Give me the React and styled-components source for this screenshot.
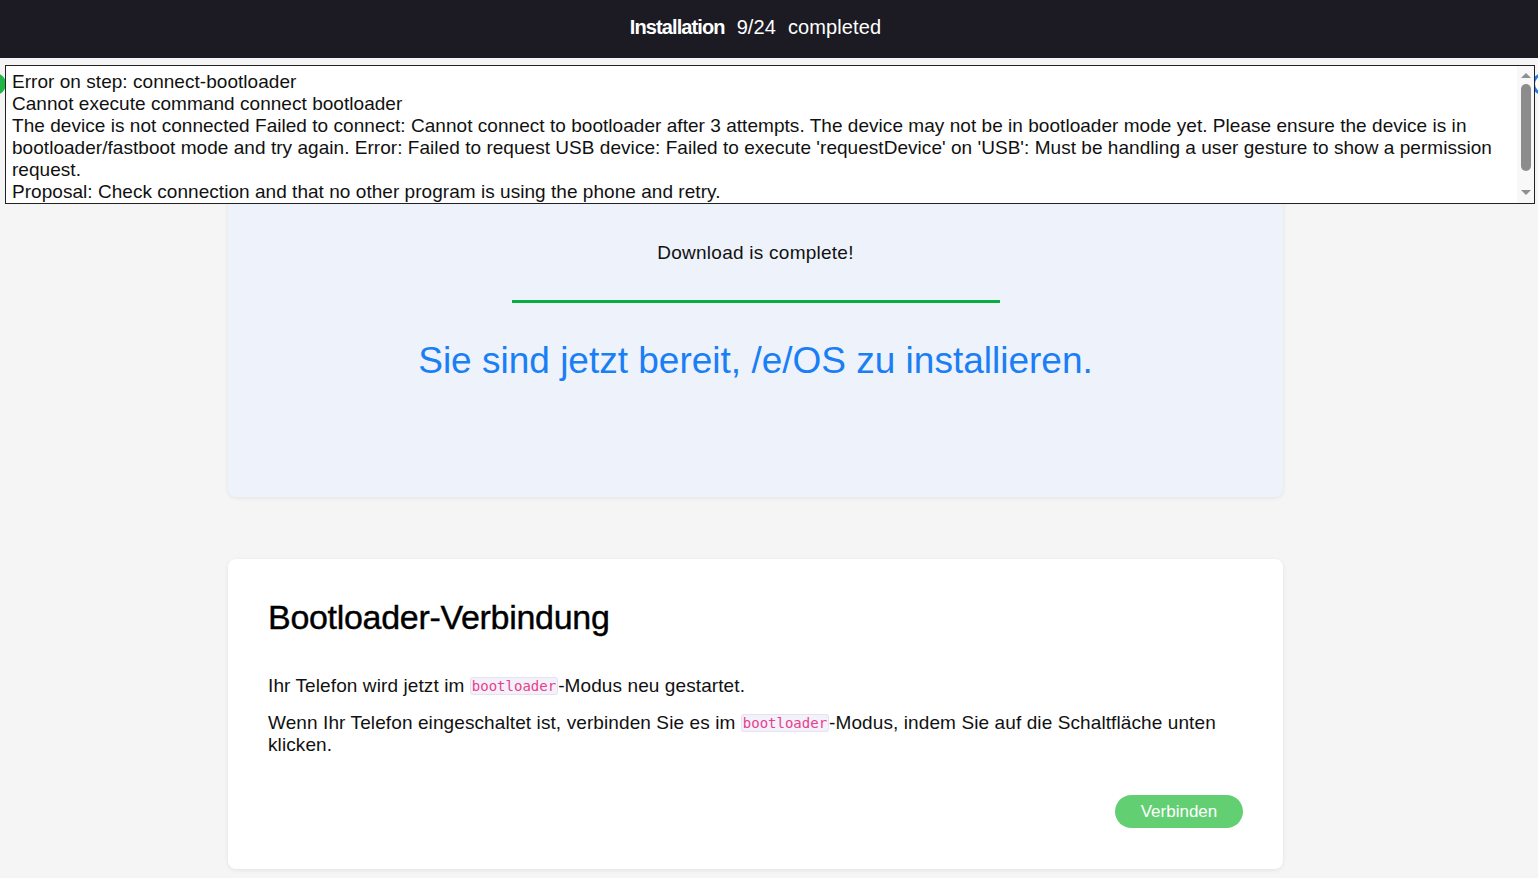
import React from 'react';
import styled, { createGlobalStyle } from 'styled-components';

const GlobalStyle = createGlobalStyle`
  html, body {
    margin: 0;
    padding: 0;
    background: #f5f5f5;
    font-family: "Liberation Sans", Arial, sans-serif;
    color: #111;
  }
`;

const Header = styled.header`
  height: 58px;
  background: #1c1b24;
  color: #ffffff;
  display: flex;
  align-items: center;
  justify-content: center;
  gap: 12px;
  font-size: 20px;
  letter-spacing: 0.1px;
  padding: 0 27px 4px 0;
  box-sizing: border-box;
`;

const HeaderStrong = styled.span`
  font-weight: 700;
  letter-spacing: -0.9px;
`;

const StepRow = styled.div`
  display: flex;
  justify-content: space-between;
  align-items: center;
  margin: 14px -16px 0;
  height: 24px;
`;

const StepDot = styled.span`
  width: 22px;
  height: 22px;
  border-radius: 50%;
  box-sizing: border-box;
  background: ${(p) => (p.$done ? '#20b646' : '#ffffff')};
  border: 3px solid ${(p) => (p.$done ? '#20b646' : '#1a7ef5')};
`;

const Page = styled.div`
  padding-right: 27px;
`;

const Main = styled.main`
  width: 1055px;
  margin: 0 auto;
  display: flex;
  flex-direction: column;
  gap: 62px;
  padding-bottom: 40px;
`;

const Card = styled.section`
  background: ${(p) => (p.$tinted ? '#edf2fb' : '#ffffff')};
  border-radius: 8px;
  box-shadow: 0 1px 4px rgba(0, 0, 0, 0.08);
  box-sizing: border-box;
`;

const DownloadCard = styled(Card)`
  margin-top: 8px;
  padding: 138px 40px 114px;
  display: flex;
  flex-direction: column;
  align-items: center;
`;

const Status = styled.p`
  margin: 0;
  font-size: 19px;
  letter-spacing: 0.25px;
  line-height: 22px;
  color: #111;
`;

const Progress = styled.div`
  width: 488px;
  height: 3px;
  background: #05ae3e;
  margin: 36px 0 36px;
`;

const Ready = styled.h1`
  margin: 0;
  font-weight: 400;
  font-size: 37px;
  line-height: 44px;
  color: #1a7ef5;
  letter-spacing: 0;
`;

const StepCard = styled(Card)`
  padding: 38px 40px 41px;
  display: flex;
  flex-direction: column;
`;

const Title = styled.h2`
  margin: 0 0 38px;
  font-size: 34px;
  line-height: 40px;
  font-weight: 400;
  -webkit-text-stroke: 0.4px #000;
  letter-spacing: -0.3px;
  color: #000;
`;

const Text = styled.p`
  margin: 0 0 17px;
  font-size: 19px;
  letter-spacing: 0.1px;
  line-height: 22px;
  color: #111;

  & + & {
    margin-top: -2px;
  }
`;

const Code = styled.code`
  font-family: "DejaVu Sans Mono", "Liberation Mono", monospace;
  font-size: 14px;
  line-height: 16px;
  letter-spacing: 0;
  color: #e83e8c;
  background: #f3f1fa;
  border: 1px solid #e6e3f0;
  border-radius: 3px;
  padding: 0 1px;
  vertical-align: 1px;
`;

const Actions = styled.div`
  display: flex;
  justify-content: flex-end;
  margin-top: 22px;
`;

const Button = styled.button`
  height: 33px;
  width: 128px;
  border: none;
  border-radius: 17px;
  background: #63cf73;
  color: #ffffff;
  font-family: "Liberation Sans", Arial, sans-serif;
  font-size: 17px;
  cursor: pointer;
`;

const ErrorBox = styled.div`
  position: fixed;
  top: 65px;
  left: 5px;
  width: 1530px;
  height: 139px;
  box-sizing: border-box;
  border: 1px solid #222;
  background: #ffffff;
  display: flex;
`;

const ErrorText = styled.div`
  flex: 1;
  overflow: hidden;
  padding: 5px 6px;
  font-size: 19px;
  letter-spacing: 0.04px;
  line-height: 22px;
  color: #111;
  white-space: pre-wrap;
`;

const ScrollTrack = styled.div`
  width: 17px;
  background: #f8f8f8;
  display: flex;
  flex-direction: column;
  align-items: center;
  padding: 7px 0 8px;
  box-sizing: border-box;
`;

const Arrow = styled.span`
  width: 0;
  height: 0;
  border-left: 5px solid transparent;
  border-right: 5px solid transparent;
  ${(p) =>
    p.$down
      ? 'border-top: 5px solid #8f8f8f;'
      : 'border-bottom: 5px solid #8f8f8f;'}
`;

const Thumb = styled.span`
  width: 10px;
  height: 87px;
  margin: 6px 0 auto;
  border-radius: 5px;
  background: #8c8c8c;
`;

const errorMessage = `Error on step: connect-bootloader
Cannot execute command connect bootloader
The device is not connected Failed to connect: Cannot connect to bootloader after 3 attempts. The device may not be in bootloader mode yet. Please ensure the device is in bootloader/fastboot mode and try again. Error: Failed to request USB device: Failed to execute 'requestDevice' on 'USB': Must be handling a user gesture to show a permission request.
Proposal: Check connection and that no other program is using the phone and retry.`;

export default function App() {
  return (
    <>
      <GlobalStyle />
      <Header>
        <HeaderStrong>Installation</HeaderStrong>
        <span>9/24</span>
        <span>completed</span>
      </Header>
      <StepRow>
        <StepDot $done />
        <StepDot />
      </StepRow>
      <Page>
        <Main>
          <DownloadCard $tinted>
            <Status>Download is complete!</Status>
            <Progress />
            <Ready>Sie sind jetzt bereit, /e/OS zu installieren.</Ready>
          </DownloadCard>
          <StepCard>
            <Title>Bootloader-Verbindung</Title>
            <Text>
              Ihr Telefon wird jetzt im <Code>bootloader</Code>-Modus neu gestartet.
            </Text>
            <Text>
              Wenn Ihr Telefon eingeschaltet ist, verbinden Sie es im <Code>bootloader</Code>-Modus,
              indem Sie auf die Schaltfläche unten klicken.
            </Text>
            <Actions>
              <Button>Verbinden</Button>
            </Actions>
          </StepCard>
        </Main>
      </Page>
      <ErrorBox>
        <ErrorText>{errorMessage}</ErrorText>
        <ScrollTrack>
          <Arrow />
          <Thumb />
          <Arrow $down />
        </ScrollTrack>
      </ErrorBox>
    </>
  );
}
